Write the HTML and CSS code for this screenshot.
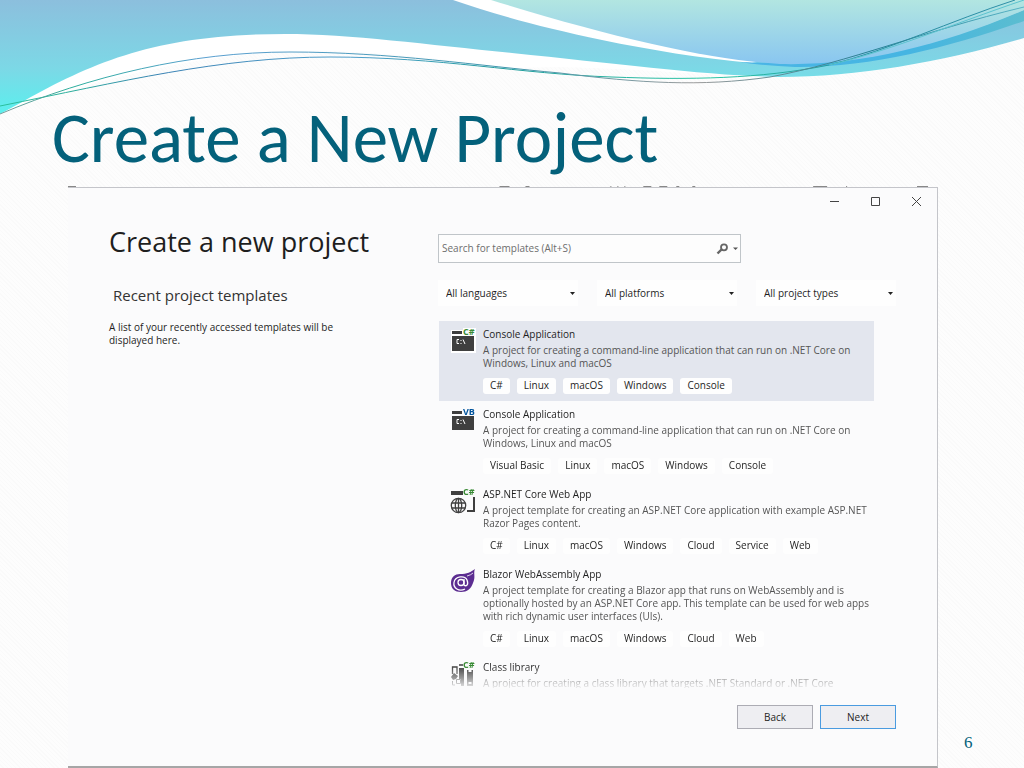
FILE: index.html
```html
<!DOCTYPE html>
<html lang="en">
<head>
<meta charset="utf-8">
<title>Create a New Project</title>
<link rel="stylesheet" href="styles.css">
</head>
<body>
<svg class="waves" viewBox="0 0 1024 120" preserveAspectRatio="none" aria-hidden="true">
  <defs>
    <linearGradient id="band" gradientUnits="userSpaceOnUse" x1="0" y1="0" x2="0" y2="114"><stop offset="0" stop-color="#8cbfdd"/><stop offset=".6" stop-color="#7cd8e6"/><stop offset="1" stop-color="#5af0ee"/></linearGradient>
    <linearGradient id="pale" x1="0" y1="0" x2="0" y2="1"><stop offset="0" stop-color="#b2e6e1"/><stop offset="1" stop-color="#89c6f0"/></linearGradient>
    <linearGradient id="deep" x1="0" y1="0" x2="1" y2="0"><stop offset="0" stop-color="#4bb5e6"/><stop offset=".6" stop-color="#45b5e2"/><stop offset="1" stop-color="#5bbdd0"/></linearGradient>
    <linearGradient id="line" x1="0" y1="0" x2="1" y2="0"><stop offset="0" stop-color="#2cbf9c"/><stop offset=".07" stop-color="#2cae9c"/><stop offset=".16" stop-color="#3a82b4"/><stop offset=".35" stop-color="#4f9fcb"/><stop offset=".5" stop-color="#1f9c9c"/><stop offset=".7" stop-color="#2cc7a5"/><stop offset=".85" stop-color="#248f9c"/><stop offset="1" stop-color="#2f8fa8"/></linearGradient>
    <linearGradient id="line2" x1="0" y1="0" x2="1" y2="0"><stop offset="0" stop-color="#7a9a9a"/><stop offset=".07" stop-color="#2cae9c"/><stop offset=".2" stop-color="#5a9fd0"/><stop offset=".5" stop-color="#3f97ad"/><stop offset=".68" stop-color="#9a9a9a"/><stop offset=".85" stop-color="#237f92"/><stop offset="1" stop-color="#58b3c6"/></linearGradient>
  </defs>
  <path fill="#fff" d="M0 0H1024V38C950 60 860 78 779 77C700 76 600 64 512 68C420 56 340 48 290 52C200 54 90 80 0 114Z"/>
  <path fill="url(#band)" d="M0 0H453C490 13 540 27 602 40C650 50 700 58 752 63L1024 10V38C945 61 860 77 779 77C712 76 620 64 512 53C430 45 350 34 285 34C160 34 95 61 24 101L0 114Z"/>
  <path fill="url(#deep)" d="M740 62Q890 68 1024 10V21C950 47 870 68 795 67Q765 66 740 62Z"/>
  <path fill="url(#pale)" d="M491 0H1024V10C940 46 860 66 780 64C710 60 610 37 491 0Z"/>
  <g fill="none" stroke-width="1">
    <path stroke="url(#line)" d="M0 106C120 82 220 57 330 57C440 57 520 74 612 77C690 80 760 79 829 65C890 50 950 21 1015 0"/>
    <path stroke="url(#line2)" d="M0 114C90 76 190 52 290 52C390 52 480 66 560 73C640 83 700 87 770 77C850 62 920 32 1024 7"/>
    <path stroke="#5cc3cf" d="M829 65C890 51 950 25 1024 0"/>
  </g>
</svg>

<h1 class="slide-title">Create a New Project</h1>

<div class="stage">
  <main class="window">
    <svg class="edge" viewBox="0 0 870 1" preserveAspectRatio="none" aria-hidden="true"><path stroke="#888" stroke-width="1" d="M0 .5H8M432 .5H442M458 .5H462M543 .5H544M550 .5H551M557 .5H558M576 .5H584M592 .5H600M609 .5H612M625 .5H628M746 .5H760M779 .5H780M850 .5H861"/></svg>
    <div class="titlebar">
      <button class="winbtn" aria-label="Minimize"><svg width="11" height="11"><path d="M1 5.500H10" /></svg></button>
      <button class="winbtn" aria-label="Maximize"><svg width="11" height="11"><path d="M1.500 1.500H9.500V9.500H1.500Z"/></svg></button>
      <button class="winbtn" aria-label="Close"><svg width="11" height="11"><path d="M1 1L10 10M10 1L1 10"/></svg></button>
    </div>
    <div class="content">
      <section class="recent">
        <h2 class="heading">Create a new project</h2>
        <h3 class="subheading">Recent project templates</h3>
        <p class="note">A list of your recently accessed templates will be displayed here.</p>
      </section>
      <section class="browser">
        <div class="search">
          <input class="search-input" type="text" aria-label="Search for templates" placeholder="Search for templates (Alt+S)">
          <button class="search-btn" aria-label="Search"><svg width="22" height="12" viewBox="0 0 22 12"><circle cx="8" cy="4.300" r="3" fill="none" stroke="#666" stroke-width="1.800"/><path d="M5.500 6.500L1.500 10.500" stroke="#666" stroke-width="2.400"/><path d="M17 4.500H22L19.500 7Z" fill="#555"/></svg></button>
        </div>
        <div class="filters">
          <div class="filter"><select aria-label="Language"><option>All languages</option></select><svg class="arrow" width="5" height="3"><path d="M0 0H5L2.500 3Z"/></svg></div>
          <div class="filter"><select aria-label="Platform"><option>All platforms</option></select><svg class="arrow" width="5" height="3"><path d="M0 0H5L2.500 3Z"/></svg></div>
          <div class="filter"><select aria-label="Project type"><option>All project types</option></select><svg class="arrow" width="5" height="3"><path d="M0 0H5L2.500 3Z"/></svg></div>
        </div>
        <ul class="list">
          <li class="item selected">
            <svg class="icon" viewBox="0 0 26 26"><path fill="#fff" d="M1 2H13V0H26V25H1Z"/><path fill="#3f3f3f" d="M2 3H12V6H2ZM2 8H24V23H2Z"/><path fill="none" stroke="#fff" d="M9 11.500H7V15.500H9M11 12V13M11 15V16M13 11.500L15 16"/><text class="lang cs" x="13" y="7">C#</text></svg>
            <div class="body">
              <h4>Console Application</h4>
              <p>A project for creating a command-line application that can run on .NET Core on Windows, Linux and macOS</p>
              <div class="tags"><span>C#</span><span>Linux</span><span>macOS</span><span>Windows</span><span>Console</span></div>
            </div>
          </li>
          <li class="item">
            <svg class="icon" viewBox="0 0 26 26"><path fill="#3f3f3f" d="M2 3H12V6H2ZM2 8H24V22H2Z"/><path fill="none" stroke="#fff" d="M9 11.500H7V15.500H9M11 12V13M11 15V16M13 11.500L15 16"/><text class="lang vb" x="13" y="7">VB</text></svg>
            <div class="body">
              <h4>Console Application</h4>
              <p>A project for creating a command-line application that can run on .NET Core on Windows, Linux and macOS</p>
              <div class="tags"><span>Visual Basic</span><span>Linux</span><span>macOS</span><span>Windows</span><span>Console</span></div>
            </div>
          </li>
          <li class="item">
            <svg class="icon" viewBox="0 0 26 26"><path fill="#3f3f3f" d="M1 3H13V7H1ZM22 9H25V24H17V22H23V9Z"/><g fill="#fbfbfc" stroke="#3f3f3f" stroke-width="1.300"><circle cx="8.500" cy="17.500" r="7.200"/><ellipse cx="8.500" cy="17.500" rx="3.200" ry="7.200"/><path fill="none" d="M2 15H15M2 20H15M8.500 10V25"/></g><text class="lang cs" x="13" y="7">C#</text></svg>
            <div class="body">
              <h4>ASP.NET Core Web App</h4>
              <p>A project template for creating an ASP.NET Core application with example ASP.NET Razor Pages content.</p>
              <div class="tags"><span>C#</span><span>Linux</span><span>macOS</span><span>Windows</span><span>Cloud</span><span>Service</span><span>Web</span></div>
            </div>
          </li>
          <li class="item">
            <svg class="icon" viewBox="0 0 26 26"><path fill="#5c2d91" d="M25 1C23 5 26 9 23 15C21 21 17 24 11 24C5 24 1 21 1 15C1 9 5 6 10 6C17 6 21 4 25 1Z"/><g fill="none" stroke="#fff" stroke-width="1.300"><path d="M15 21C9 24 3 20 4 14.500C5 8 15 7 17 12C19 17 16 19 14 17V11"/><circle cx="11" cy="14.500" r="3"/></g><path stroke="#fff" fill="none" stroke-width=".8" d="M17 8Q21 7 23 5"/></svg>
            <div class="body">
              <h4>Blazor WebAssembly App</h4>
              <p>A project template for creating a Blazor app that runs on WebAssembly and is optionally hosted by an ASP.NET Core app. This template can be used for web apps with rich dynamic user interfaces (UIs).</p>
              <div class="tags"><span>C#</span><span>Linux</span><span>macOS</span><span>Windows</span><span>Cloud</span><span>Web</span></div>
            </div>
          </li>
          <li class="item">
            <svg class="icon" viewBox="0 0 26 26"><path fill="none" stroke="#3f3f3f" stroke-width="1.300" d="M2.500 13V6H7V13M9 4H13"/><path fill="#3f3f3f" d="M9 7H14V25H11V18H9ZM17 9H23V25H17ZM1 16L4 12L8 15L6 18L3 19Z"/><path fill="none" stroke="#555" d="M2.500 20V24H5M6.500 18.500H10.500V22.500H6.500Z"/><path fill="#fbfbfc" d="M18.500 8H21.500V11H18.500ZM18.500 21H21.500V23H18.500Z"/><text class="lang cs" x="13" y="7">C#</text></svg>
            <div class="body">
              <h4>Class library</h4>
              <p>A project for creating a class library that targets .NET Standard or .NET Core</p>
            </div>
          </li>
        </ul>
        <div class="actions"><button>Back</button><button class="primary">Next</button></div>
      </section>
    </div>
  </main>
  <span class="page-number">6</span>
</div>
</body>
</html>
```
FILE: styles.css
```css
* { box-sizing: border-box; }

body {
  margin: 0;
  min-height: 100vh;
  display: flex;
  flex-direction: column;
  position: relative;
  background: repeating-linear-gradient(45deg, #fdfdfd 0 2px, #fafafa 2px 3px);
  color: #1e1e1e;
  font: 10px/13px "Open Sans", "Noto Sans", sans-serif;
}

h1, h2, h3, h4, p, ul { margin: 0; padding: 0; font-weight: 400; }
button, input, select { font: inherit; color: inherit; margin: 0; }

.waves {
  position: absolute;
  top: 0;
  left: 0;
  width: 100%;
  height: 120px;
}

.slide-title {
  position: relative;
  padding: 98px 52px 9px;
  color: #04617b;
  font: 71px/80px Carlito, Lato, sans-serif;
}

.stage {
  flex: 1;
  display: grid;
  grid-template-columns: minmax(0, 1fr) 86px;
  padding-left: 68px;
}

.window {
  position: relative;
  display: flex;
  flex-direction: column;
  background: #fbfbfc;
  border: solid #c4c5ca;
  border-width: 1px 1px 0 0;
  border-bottom: 2px solid #a6a6a6;
}

.edge {
  position: absolute;
  top: -2px;
  left: 0;
  width: 100%;
  height: 1px;
}

.titlebar { display: flex; justify-content: flex-end; height: 26px; }
.winbtn { width: 41px; padding: 0; border: 0; background: none; }
.winbtn svg { display: block; margin: auto; fill: none; stroke: #444; }

.content {
  flex: 1;
  display: grid;
  grid-template-columns: 370px minmax(0, 1fr);
}

.recent { padding: 11px 80px 0 41px; }
.heading { font-size: 27px; line-height: 34px; white-space: nowrap; }
.subheading { padding: 26px 0 0 4px; font-size: 15px; line-height: 20px; color: #333; }
.note { padding-top: 16px; }

.browser { padding: 20px 41px 0 0; }

.search {
  display: flex;
  width: 303px;
  height: 29px;
  border: 1px solid #c0c5c9;
  background: #fdfdfd;
}
.search-input { flex: 1; min-width: 0; padding: 0 3px; border: 0; background: none; }
.search-input::placeholder { color: #6d6d6d; opacity: 1; }
.search-btn { padding: 0 2px; border: 0; background: none; }
.search-btn svg { display: block; }

.filters { display: grid; grid-template-columns: 140px 140px 140px; gap: 19px; margin-top: 17px; }
.filter { display: flex; align-items: center; position: relative; background: #fefefe; }
.filter select {
  width: 100%;
  height: 26px;
  padding: 0 8px;
  border: 0;
  background: none;
  appearance: none;
}
.arrow { position: absolute; right: 3px; fill: #222; pointer-events: none; }

.list {
  height: 367px;
  margin: 15px 22px 0 1px;
  overflow: hidden;
  list-style: none;
  mask-image: linear-gradient(#000 345px, transparent 370px);
}
.item { display: flex; gap: 7px; padding: 7px 2px 7px 11px; }
.selected { background: #e3e6ee; }
.icon { flex: none; width: 26px; height: 26px; overflow: visible; }
.body { flex: 1; min-width: 0; }
.body h4 { font-size: 10px; line-height: 13px; }
.body p { margin-top: 3px; color: #555; }
.lang { font: bold 9px "Open Sans", sans-serif; }
.cs { fill: #388a34; }
.vb { fill: #00539c; }

.tags { display: flex; flex-wrap: wrap; gap: 7px; margin-top: 8px; }
.tags span { padding: 1px 7px 2px; border-radius: 3px; background: #fefefe; }

.actions { display: flex; justify-content: flex-end; gap: 7px; padding: 17px 0 36px; }
.actions button {
  width: 76px;
  height: 24px;
  padding: 0;
  border: 1px solid #acacb4;
  background: #eeeef2;
}
.actions .primary { border-color: #4a9be0; }

.page-number {
  align-self: end;
  padding: 0 0 16px 26px;
  color: #04617b;
  font: 17px/18px "Liberation Serif", serif;
}
```
